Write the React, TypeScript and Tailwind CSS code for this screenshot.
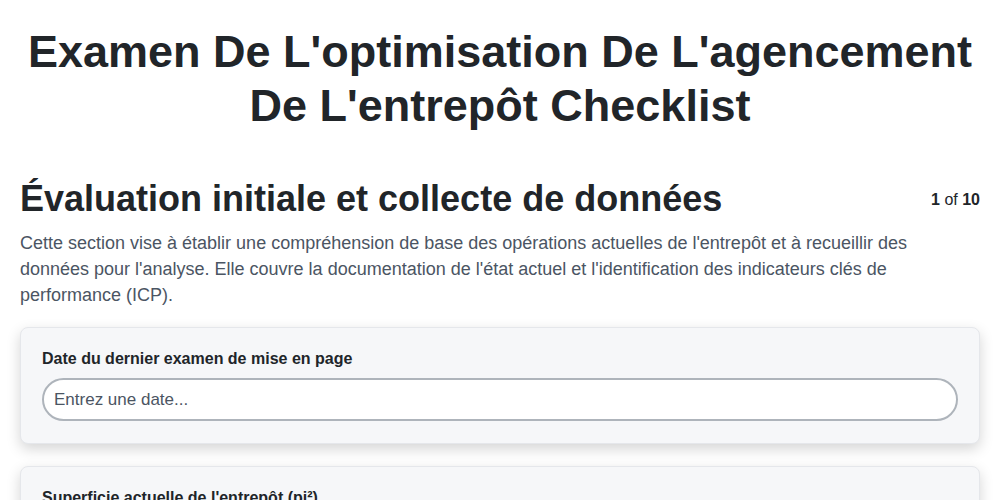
import React from 'react';

const fields = [
  { label: "Date du dernier examen de mise en page", placeholder: "Entrez une date..." },
  { label: "Superficie actuelle de l'entrepôt (pi²)", placeholder: "Entrez un nombre..." },
];

export default function App() {
  return (
    <div className="min-h-screen bg-white px-5 pt-[25px] pb-10 text-[#212529] font-['Liberation_Sans',Arial,sans-serif]">
      <h1 className="text-center text-[45px] font-bold leading-[54px]">
        Examen De L'optimisation De L'agencement De L'entrepôt Checklist
      </h1>

      <div className="mt-[44px] flex items-start justify-between">
        <h2 className="text-[36px] font-bold leading-[43px]">Évaluation initiale et collecte de données</h2>
        <div className="pt-[11px] text-[16px] leading-[24px] whitespace-nowrap">
          <span className="font-bold">1</span> of <span className="font-bold">10</span>
        </div>
      </div>
      <p className="mt-[10px] text-[18px] leading-[26px] text-[#4b5563]">
        Cette section vise à établir une compréhension de base des opérations actuelles de l'entrepôt et à recueillir des
        données pour l'analyse. Elle couvre la documentation de l'état actuel et l'identification des indicateurs clés de
        performance (ICP).
      </p>

      <div className="mt-[19px] flex flex-col gap-[22px]">
        {fields.map((f) => (
          <div
            key={f.label}
            className="rounded-lg border border-gray-200 bg-[#f6f7f9] px-[21px] pt-[19px] pb-[22px] shadow-[0_5px_14px_rgba(0,0,0,0.17)]"
          >
            <label className="block text-[16px] font-bold leading-[24px] text-[#212529]">{f.label}</label>
            <input
              className="mt-[7px] block h-[43px] w-full rounded-full border-2 border-[#aeb4bb] bg-white px-[10px] text-[17px] text-[#212529] placeholder:text-[#4b5563] outline-none"
              placeholder={f.placeholder}
            />
          </div>
        ))}
      </div>
    </div>
  );
}
